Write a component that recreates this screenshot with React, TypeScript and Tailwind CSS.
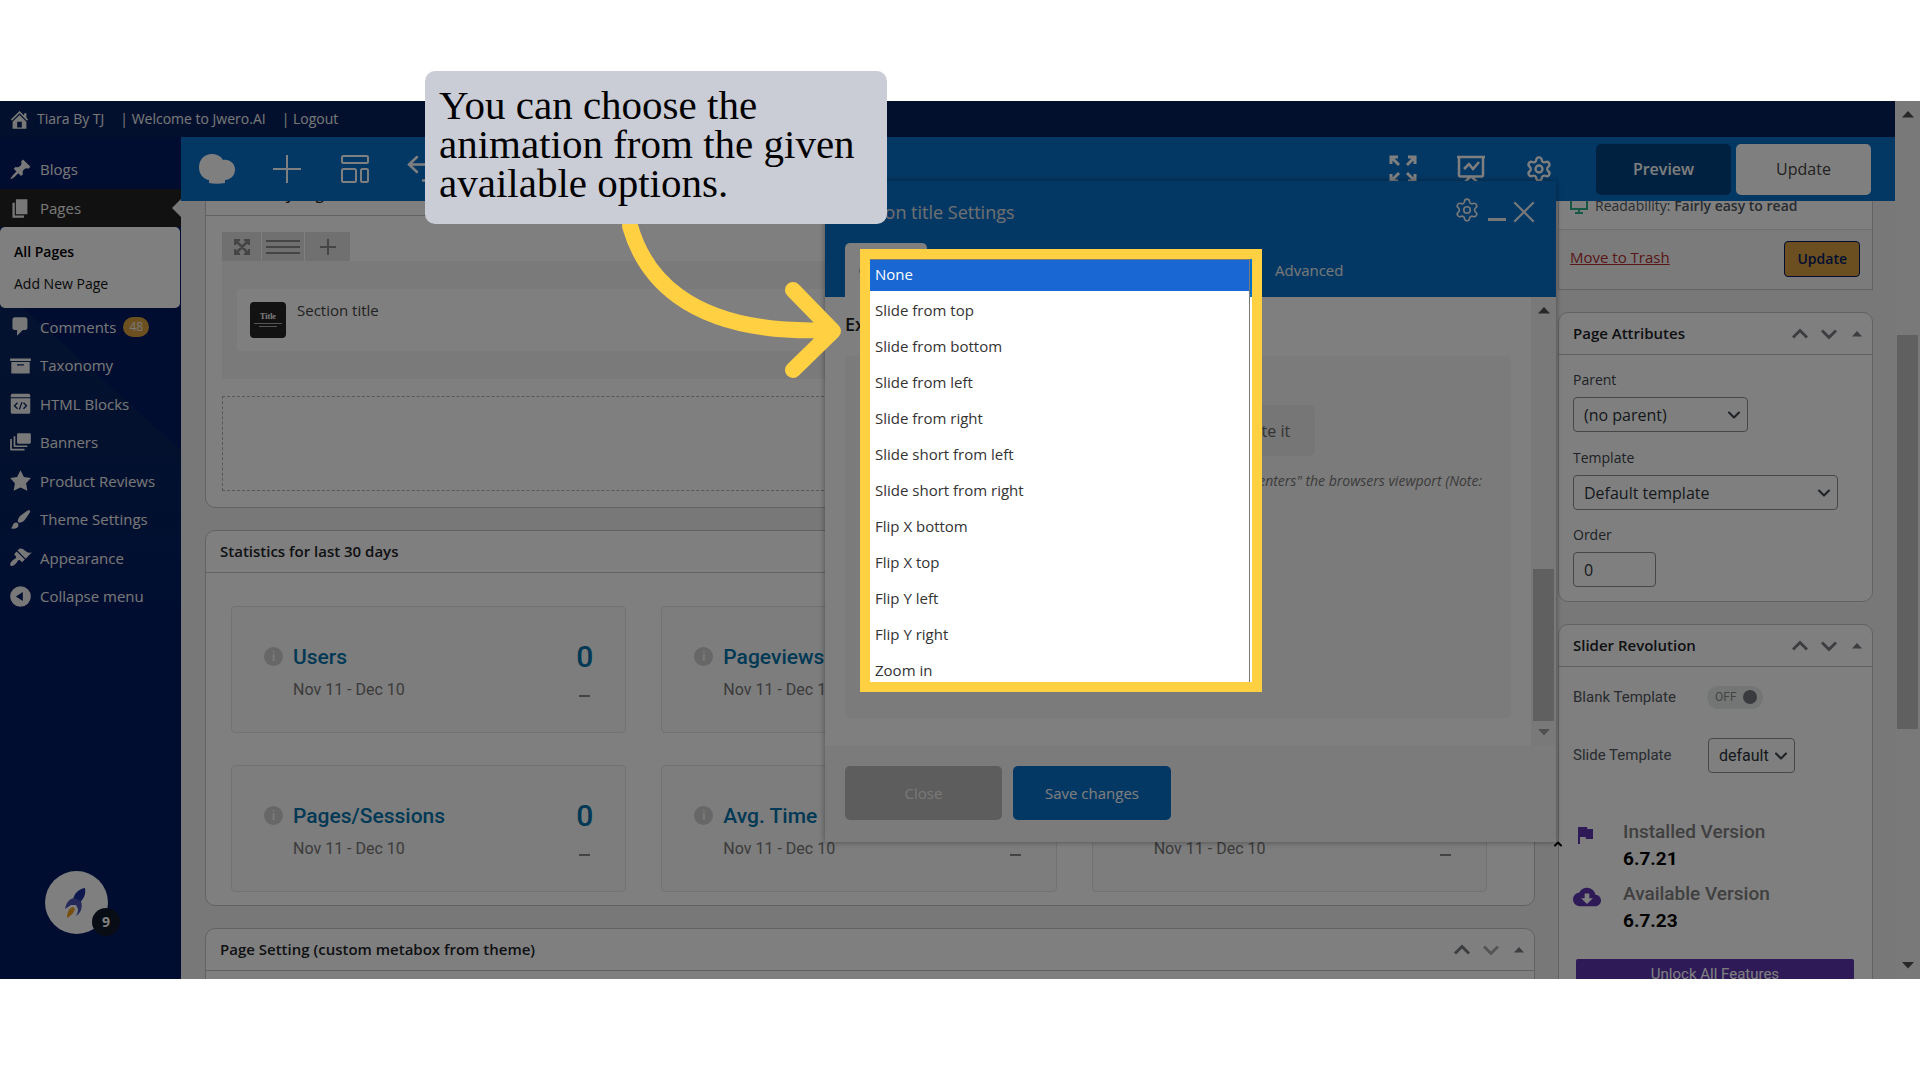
import React from "react";
import { ChevronDown, ChevronUp, Settings, X } from "lucide-react";
import { MdCloudDownload, MdFlag } from "react-icons/md";

const sans = "font-['Open_Sans','Noto_Sans',sans-serif]";

const animations = [
  "None",
  "Slide from top",
  "Slide from bottom",
  "Slide from left",
  "Slide from right",
  "Slide short from left",
  "Slide short from right",
  "Flip X bottom",
  "Flip X top",
  "Flip Y left",
  "Flip Y right",
  "Zoom in",
];

const stats = ["Users", "Pageviews", "Sessions", "Pages/Sessions", "Avg. Time", "Bounce Rate"];

const icons = {
  home: "M16 8.5l1.53 1.53-1.06 1.06L10 4.6l-6.47 6.49-1.06-1.06L10 2.5l4 4v-2h2v4zm-6-2.46l6 5.99V18H4v-5.97zM12 17v-5H8v5h4z",
  pin: "M10.44 3.02l1.82-1.82 6.36 6.35-1.83 1.82c-1.05-.68-2.48-.57-3.41.36l-.75.75c-.92.93-1.04 2.35-.35 3.41l-1.83 1.82-2.41-2.41-2.8 2.79c-.42.42-3.38 2.71-3.8 2.29s1.86-3.39 2.28-3.81l2.79-2.79L4.1 9.36l1.83-1.82c1.05.69 2.48.57 3.4-.36l.75-.75c.93-.92 1.05-2.35.36-3.41z",
  page: "M6 15V2h10v13H6zm-1 1h8v2H3V5h2v11z",
  comment: "M5 2h9c1.1 0 2 .9 2 2v7c0 1.1-.9 2-2 2h-2l-5 5v-5H5c-1.1 0-2-.9-2-2V4c0-1.1.9-2 2-2z",
  archive: "M19 4v2H1V4h18zM2 7h16v10H2V7zm11 3V9H7v1h6z",
  html: "M3 1.5h14a1.5 1.5 0 0 1 1.5 1.5v1.5h-17V3A1.5 1.5 0 0 1 3 1.5zM1.5 5.5h17v12a1.5 1.5 0 0 1-1.5 1.5H3a1.5 1.5 0 0 1-1.5-1.5zM7 9l-3 3 3 3 .8-.8L5.6 12l2.2-2.2zm6 0l-.8.8 2.2 2.2-2.2 2.2.8.8 3-3zm-2.2-.3l-2.3 6.4 1 .3 2.3-6.4z",
  banners: "M8 2h10q1 0 1 1v7q0 1-1 1H8q-1 0-1-1V3q0-1 1-1zM4 4.5h1.5v8h10.5V14H5q-1 0-1-1zM1 7h1.5v8.5h11V17H2q-1 0-1-1z",
  star: "M10 1l3 6 6 .75-4.12 4.62L16 19l-6-3-6 3 1.13-6.63L1 7.75 7 7z",
  brush: "M18.33 3.57s.27-.8-.31-1.36c-.53-.52-1.22-.24-1.22-.24-.61.3-5.76 3.47-7.67 5.57-.86.96-2.06 3.79-1.09 4.82.92.98 3.96-.17 4.79-1 2.06-2.06 5.21-7.17 5.5-7.79zM1.4 17.65c2.37-1.56 1.46-3.41 3.23-4.64.93-.65 2.22-.62 3.08.29.63.67.8 2.57-.16 3.46-1.57 1.45-4 1.55-6.15.89z",
  appearance: "M14.48 11.06L7.41 3.99l1.5-1.5c.5-.56 2.3-.47 3.51.32 1.21.8 1.43 1.28 2.91 2.1 1.18.64 2.45 1.26 4.45.85zm-.71.71L6.7 4.7 4.93 6.47c-.39.39-.39 1.02 0 1.41l1.06 1.06c.39.39.39 1.03 0 1.42-.6.6-1.43 1.11-2.21 1.69-.35.26-.7.53-1.01.84C1.43 14.23.4 16.08 1.4 17.07c.99 1 2.84-.03 4.18-1.36.31-.31.58-.66.85-1.02.57-.78 1.08-1.61 1.69-2.21.39-.39 1.02-.39 1.41 0l1.06 1.06c.39.39 1.02.39 1.41 0z",
  collapse: "M10 1a9 9 0 1 1 0 18 9 9 0 0 1 0-18zm2 5l-6 4 6 4z",
};

const menu = [
  { label: "Comments", icon: icons.comment, count: 48 },
  { label: "Taxonomy", icon: icons.archive },
  { label: "HTML Blocks", icon: icons.html },
  { label: "Banners", icon: icons.banners },
  { label: "Product Reviews", icon: icons.star },
  { label: "Theme Settings", icon: icons.brush },
  { label: "Appearance", icon: icons.appearance },
];

const Dashicon = ({ d }: { d: string }) => (
  <svg viewBox="0 0 20 20" className="size-[23px] shrink-0" fill="currentColor" fillRule="evenodd" aria-hidden="true">
    <path d={d} />
  </svg>
);

const Triangle = ({ className = "", down = false }: { className?: string; down?: boolean }) => (
  <svg viewBox="0 0 12 7" className={className} fill="currentColor" aria-hidden="true">
    <path d={down ? "M0 0h12L6 6.5z" : "M0 6.5h12L6 0z"} />
  </svg>
);

const Scrollbar = ({ children, atEnd = false }: { children: React.ReactNode; atEnd?: boolean }) => (
  <div className="flex w-[25px] shrink-0 flex-col items-center bg-[#f3f3f3] px-0.5 text-[#505050]">
    <Triangle className="mt-2.5 h-[7px] w-3" />
    <div className="flex w-full flex-1 flex-col">{children}</div>
    <Triangle down className={atEnd ? "mb-2.5 h-[7px] w-3 text-[#a0a0a0]" : "mb-2.5 h-[7px] w-3"} />
  </div>
);

const PanelHeader = ({ title, disabledDown = false }: { title: string; disabledDown?: boolean }) => (
  <div className="flex h-[42px] items-center justify-between border-b border-[#c3c4c7] pr-2.5 pl-3.5">
    <h2 className="text-[15px] font-semibold text-[#1d2327]">{title}</h2>
    <div className="flex items-center gap-px text-[#787c82]">
      <button type="button" aria-label="Move up">
        <ChevronUp className="size-7" strokeWidth={2.5} strokeLinecap="butt" strokeLinejoin="miter" />
      </button>
      <button type="button" aria-label="Move down" className={disabledDown ? "text-[#a7aaad]" : ""}>
        <ChevronDown className="size-7" strokeWidth={2.5} strokeLinecap="butt" strokeLinejoin="miter" />
      </button>
      <button type="button" aria-label="Toggle panel" className="pl-2">
        <Triangle className="h-2 w-2.5" />
      </button>
    </div>
  </div>
);

const Select = ({ id, value, className }: { id: string; value: string; className: string }) => (
  <span className="relative block w-fit">
    <select
      id={id}
      defaultValue={value}
      className={`h-[35px] appearance-none rounded-[4px] border border-[#8c8f94] bg-white pl-2.5 text-base font-normal text-[#2c3338] ${className}`}
    >
      <option>{value}</option>
    </select>
    <ChevronDown className="pointer-events-none absolute top-2 right-1 size-5 text-[#3c434a]" strokeWidth={2.5} />
  </span>
);

const AdminMenu = () => (
  <nav className="relative w-[181px] shrink-0 overflow-hidden bg-[#001a62] text-[15px] text-[#f0f0f1]">
    <div className="absolute inset-x-0 top-[150px] h-[340px] bg-linear-to-b from-[#08255e] via-[#06225e] to-[#001a62] [clip-path:polygon(0_0,181px_163px,181px_100%,0_100%)]" />
    <div className="relative">
      <a href="#blogs" className="mt-[13px] flex h-[39px] items-center gap-2 pl-[9px]">
        <Dashicon d={icons.pin} />
        Blogs
      </a>
      <a href="#pages" className="relative flex h-[38px] items-center gap-2 bg-[#222222] pl-[9px]">
        <Dashicon d={icons.page} />
        Pages
        <span className="absolute top-2.5 right-0 h-[18px] w-[9px] bg-[#f1f1f1] [clip-path:polygon(100%_0,100%_100%,0_50%)]" />
      </a>
      <div className="mr-px flex h-[81px] flex-col justify-center rounded-[5px] bg-white pl-3.5 text-sm leading-8 text-[#111111]">
        <a href="#all" className="font-semibold text-black">All Pages</a>
        <a href="#new">Add New Page</a>
      </div>
      <div className="flex h-[308px] flex-col">
        {menu.map((item) => (
          <a href="#menu" key={item.label} className="flex flex-1 items-center gap-2 pb-px pl-[9px]">
            <Dashicon d={item.icon} />
            <span>{item.label}</span>
            {item.count && (
              <span className="-ml-px flex h-5 items-center rounded-full bg-[#d9a03f] px-1.5 text-xs">{item.count}</span>
            )}
          </a>
        ))}
        <button type="button" className="flex flex-1 items-center gap-2 pb-px pl-[9px]">
          <Dashicon d={icons.collapse} />
          Collapse menu
        </button>
      </div>
    </div>
  </nav>
);

const EditorBar = () => (
  <header className="flex h-16 shrink-0 items-center bg-[#0870c9] pr-6 pl-[18px] text-white">
    <svg viewBox="0 0 36 30" className="h-[30px] w-9" fill="currentColor" aria-hidden="true">
      <path d="M13 0c5 0 9 2.5 11 6 7-1 12 4 12 9.5 0 6-4 10-10 10.5v3c-5 1-11 1-16 0v-3C4 25 0 20 0 13.5 0 5 6 0 13 0z" />
    </svg>
    <button type="button" aria-label="Add element" className="ml-[38px]">
      <svg viewBox="0 0 28 28" className="size-7" stroke="currentColor" strokeWidth="2">
        <path d="M14 0v28M0 14h28" />
      </svg>
    </button>
    <button type="button" aria-label="Templates" className="ml-10">
      <svg viewBox="0 0 28 28" className="size-7" fill="none" stroke="currentColor" strokeWidth="2">
        <rect x="1" y="1" width="26" height="7" rx="1.5" />
        <rect x="1" y="14" width="14" height="13" rx="1.5" />
        <rect x="20" y="14" width="7" height="13" rx="1.5" />
      </svg>
    </button>
    <button type="button" aria-label="Undo" className="ml-[38px]">
      <svg viewBox="0 0 28 28" className="size-7" fill="none" stroke="currentColor" strokeWidth="2.5" strokeLinecap="round">
        <path d="M10 2L2 9.5 10 17M2 9.5h16c10 0 10 16 0 16h-2" />
      </svg>
    </button>
    <div className="ml-auto flex items-center gap-10">
      <button type="button" aria-label="Fullscreen">
        <svg viewBox="0 0 28 28" className="size-7" fill="none" stroke="currentColor" strokeWidth="3">
          <path d="M2 9V2h7M2 2l8 8M19 2h7v7M26 2l-8 8M2 19v7h7M2 26l8-8M19 26h7v-7M26 26l-8-8" />
        </svg>
      </button>
      <button type="button" aria-label="Page performance">
        <svg viewBox="0 0 28 28" className="size-7" fill="none" stroke="currentColor" strokeWidth="2.5">
          <path d="M0 2h28M2 2v18q0 1.5 1.5 1.5h21q1.5 0 1.5-1.5V2M7 14l5-5 4 5 6-7M14 21l-7 7M14 21l7 7" />
        </svg>
      </button>
      <button type="button" aria-label="Settings">
        <Settings className="size-7" />
      </button>
    </div>
    <div className="ml-[43px] flex gap-[5px] text-base font-semibold">
      <button type="button" className="h-[51px] w-[135px] rounded-[5px] bg-[#004481]">Preview</button>
      <button type="button" className="h-[51px] w-[135px] rounded-[5px] bg-white font-medium text-[#444444]">Update</button>
    </div>
  </header>
);

const StatCard = ({ title }: { title: string }) => (
  <div className="flex h-[127px] justify-between rounded-[4px] border border-[#e4e4e4] bg-[#fafafa] px-8 pt-[34px] font-['Roboto',sans-serif]">
    <div className="flex gap-2.5">
      <span className="mt-1.5 flex size-[19px] items-center justify-center rounded-full bg-[#cfcfcf] text-xs font-bold text-[#f4f4f4]">i</span>
      <div>
        <h3 className="text-[21px] leading-8 font-medium text-[#0073aa]">{title}</h3>
        <p className="leading-[34px] text-[#777777]">Nov 11 - Dec 10</p>
      </div>
    </div>
    <div className="flex flex-col items-center">
      <span className="text-3xl leading-8 font-medium text-[#0073aa]">0</span>
      <span className="mt-[22px] h-[2px] w-[11px] bg-[#888888]" />
    </div>
  </div>
);

const MainColumn = () => (
  <main className="-mt-7 flex min-w-0 flex-1 flex-col gap-[22px]">
    <section className="rounded-[10px] border border-[#c3c4c7] bg-white">
      <div className="flex h-[42px] items-center border-b border-[#c3c4c7] pl-3.5">
        <h2 className="text-[15px] font-semibold text-[#1d2327]">WPBakery Page Builder</h2>
      </div>
      <div className="p-4">
        <div className="flex gap-px text-[#8a8a8a]">
          <button type="button" aria-label="Drag row" className="flex h-[29px] w-[39px] items-center justify-center bg-[#e0e0e0]">
            <svg viewBox="0 0 16 16" className="size-4" fill="none" stroke="currentColor" strokeWidth="2.5">
              <path d="M1 6V1h5M10 1h5v5M15 10v5h-5M6 15H1v-5M2 2l12 12M14 2L2 14" />
            </svg>
          </button>
          <button type="button" aria-label="Row layout" className="flex h-[29px] w-[42px] flex-col items-center justify-center gap-1 bg-[#e0e0e0]">
            <span className="h-[2px] w-[34px] bg-[#8a8a8a]" />
            <span className="h-[2px] w-[34px] bg-[#8a8a8a]" />
            <span className="h-[2px] w-[34px] bg-[#8a8a8a]" />
          </button>
          <button type="button" aria-label="Add column" className="flex h-[29px] w-[45px] items-center justify-center bg-[#e0e0e0]">
            <svg viewBox="0 0 16 16" className="size-4" stroke="currentColor" strokeWidth="2">
              <path d="M8 0v16M0 8h16" />
            </svg>
          </button>
        </div>
        <div className="bg-[#f5f5f5] px-[15px] py-7">
          <div className="flex h-[62px] gap-[11px] rounded-[3px] bg-white pt-[13px] pl-[13px]">
            <span className="flex size-9 flex-col items-center justify-center gap-0.5 rounded-[4px] bg-[#242424] font-['Liberation_Serif',serif] text-[8px] leading-none font-bold text-white">
              Title
              <span className="h-px w-7 bg-[#aaaaaa]" />
              <span className="h-px w-[18px] bg-[#aaaaaa]" />
            </span>
            <h3 className="text-[15px] leading-4 text-[#444444]">Section title</h3>
          </div>
        </div>
        <div className="mt-[17px] h-[95px] border border-dashed border-[#b0b0b0]" />
      </div>
    </section>

    <section className="rounded-[10px] border border-[#c3c4c7] bg-white">
      <PanelHeader title="Statistics for last 30 days" />
      <div className="grid grid-cols-3 gap-x-[35px] gap-y-8 pt-[33px] pr-[47px] pb-[13px] pl-[25px]">
        {stats.map((title) => (
          <StatCard title={title} key={title} />
        ))}
      </div>
    </section>

    <section className="rounded-t-[10px] border border-[#c3c4c7] bg-white">
      <PanelHeader title="Page Setting (custom metabox from theme)" disabledDown />
      <div className="h-40" />
    </section>
  </main>
);

const SideColumn = () => (
  <aside className="-mt-3 flex w-[315px] shrink-0 flex-col gap-[22px]">
    <section className="border border-[#c3c4c7] bg-white text-sm">
      <div className="flex h-10 items-center gap-[7px] border-b border-[#dcdcde] pb-2 pl-[11px] text-[#50575e]">
        <svg viewBox="0 0 18 18" className="size-[18px]" fill="none" stroke="#2fae8a" strokeWidth="2">
          <path d="M1 1h16v11H1zM9 12v4M5 16h8" />
        </svg>
        <p>
          Readability: <span className="font-semibold">Fairly easy to read</span>
        </p>
      </div>
      <div className="flex h-[59px] items-center justify-between bg-[#f6f7f7] pr-3 pb-0.5 pl-[11px]">
        <a href="#trash" className="pb-0.5 text-[15px] text-[#b32d2e] underline">Move to Trash</a>
        <button type="button" className="h-9 rounded-[4px] border border-[#001a62] bg-[#d79f40] px-3 font-semibold text-[#001a62]">
          Update
        </button>
      </div>
    </section>

    <section className="rounded-[10px] border border-[#c3c4c7] bg-white">
      <PanelHeader title="Page Attributes" />
      <div className="p-3.5 text-sm font-medium text-[#3c434a]">
        <label htmlFor="parent" className="block h-7 leading-[22px]">Parent</label>
        <Select id="parent" value="(no parent)" className="w-[175px]" />
        <label htmlFor="template" className="mt-[15px] block h-7 leading-[22px]">Template</label>
        <Select id="template" value="Default template" className="w-[265px]" />
        <label htmlFor="order" className="mt-3.5 block h-7 leading-[22px]">Order</label>
        <input id="order" defaultValue="0" className="block h-[35px] w-[83px] rounded-[4px] border border-[#8c8f94] pl-2.5 text-base font-normal text-[#2c3338]" />
      </div>
    </section>

    <section className="rounded-t-[10px] border border-[#c3c4c7] bg-white font-['Roboto',sans-serif]">
      <div className="font-['Open_Sans','Noto_Sans',sans-serif]">
        <PanelHeader title="Slider Revolution" />
      </div>
      <div className="px-3.5 pt-[18px] text-[15px] text-[#50575e]">
        <div className="flex h-6 items-center">
          <label htmlFor="blank" className="w-[134px]">Blank Template</label>
          <button id="blank" type="button" role="switch" aria-checked="false" className="flex h-[23px] w-14 items-center justify-between rounded-full bg-[#e9edec] pr-1.5 pl-2 text-xs text-[#888888]">
            OFF
            <span className="size-3.5 rounded-full bg-[#72777c]" />
          </button>
        </div>
        <div className="mt-[29px] flex items-center">
          <label htmlFor="slide" className="w-[135px]">Slide Template</label>
          <Select id="slide" value="default" className="w-[87px]" />
        </div>
        <div className="mt-11 grid grid-cols-[50px_1fr] text-[19px] font-medium">
          <MdFlag className="mt-1.5 size-6 text-[#5e35b1]" />
          <div>
            <h3 className="leading-[30px] text-[#808080]">Installed Version</h3>
            <p className="leading-6 font-bold text-black">6.7.21</p>
          </div>
          <MdCloudDownload className="mt-3 size-7 text-[#5e35b1]" />
          <div className="pt-2">
            <h3 className="leading-[30px] text-[#808080]">Available Version</h3>
            <p className="leading-6 font-bold text-black">6.7.23</p>
          </div>
        </div>
        <button type="button" className="mx-[3px] mt-[26px] h-[31px] w-[278px] rounded-[2px] bg-[#5e35b1] text-[15px] text-white">
          Unlock All Features
        </button>
      </div>
    </section>
  </aside>
);

const SettingsWindow = () => (
  <div role="dialog" aria-label="Section title Settings" className="absolute top-20 right-[364px] flex h-[661px] w-[731px] flex-col bg-white shadow-[0_0_6px_rgba(0,0,0,0.4)]">
    <div className="flex h-[116px] shrink-0 flex-col justify-between bg-[#0870c9] pl-5 text-[#f0f0f0]">
      <div className="flex items-start justify-between pt-[13px] pr-3.5">
        <h2 className="pt-1 text-lg text-[#e0e0e0]">Section title Settings</h2>
        <div className="flex items-center">
          <button type="button" aria-label="Window settings" className="pb-1">
            <Settings className="size-[26px]" strokeWidth={1.5} />
          </button>
          <button type="button" aria-label="Minimize" className="ml-2 flex h-[18px] items-end">
            <span className="h-[3px] w-[18px] bg-current" />
          </button>
          <button type="button" aria-label="Close window">
            <X className="size-9" strokeWidth={1.5} />
          </button>
        </div>
      </div>
      <div className="flex h-[54px] items-center text-[15px]">
        <button type="button" className="h-full w-[82px] rounded-t-[5px] bg-white text-[#0870c9]">General</button>
        <button type="button" className="ml-[348px]">Advanced</button>
      </div>
    </div>
    <div className="flex min-h-0 flex-1">
      <div className="flex-1 px-5">
        <h3 className="pt-3 text-lg leading-[30px] font-semibold text-[#222222]">Ex</h3>
        <div className="mt-[17px] h-[362px] rounded-[5px] bg-[#f6f6f6] pt-[49px] pr-5 pl-[35px]">
          <button type="button" className="ml-[299px] block h-[51px] w-[136px] rounded-[5px] bg-[#ececec] pl-2.5 text-base text-[#666666]">
            Animate it
          </button>
          <p className="pt-[13px] text-sm leading-6 text-[#777777] italic">
            Select type of animation for element to be animated when it "enters" the browsers viewport (Note: works
            only in modern browsers).
          </p>
        </div>
      </div>
      <Scrollbar atEnd>
        <div className="flex-1" />
        <div className="mb-2 h-[152px] bg-[#c1c1c1]" />
      </Scrollbar>
    </div>
    <div className="flex h-24 shrink-0 gap-[11px] bg-[#f6f6f6] pt-5 pl-5 text-[15px]">
      <button type="button" className="h-[54px] w-[157px] rounded-[5px] bg-[#bababa] text-[#f0f0f0]">Close</button>
      <button type="button" className="h-[54px] w-[158px] rounded-[5px] bg-[#0870c9] text-white">Save changes</button>
    </div>
    <ChevronUp className="absolute -right-2 -bottom-2 size-3 text-black" strokeWidth={4} />
  </div>
);

const AnimationList = () => (
  <div className="absolute top-[148px] left-[860px] h-[443px] w-[402px] border-[10px] border-[#ffd042] bg-linear-to-b from-[#0870c9] from-[38px] to-white to-[38px] pr-[2px]">
    <ul role="listbox" aria-label="Animation" className="h-full overflow-hidden border-t border-r border-[#7a7a7a] bg-white text-[15px] text-[#333333]">
      {animations.map((name, key) => (
        <li
          key={name}
          role="option"
          aria-selected={key === 0}
          className={key === 0 ? "flex h-[31px] items-center bg-[#1967d2] pb-0.5 pl-[5px] text-white" : "flex h-9 items-center pt-0.5 pl-[5px]"}
        >
          {name}
        </li>
      ))}
    </ul>
  </div>
);

const App = () => {
  return (
    <div className={`h-screen bg-white py-[101px] ${sans}`}>
      <div className="relative flex h-full">
        <div className="relative flex min-w-0 flex-1 flex-col overflow-hidden">
          <div className="flex h-9 shrink-0 items-center bg-[#04215b] pl-2 text-sm text-[#f0f0f1]">
            <a href="#home" className="flex items-center gap-1.5">
              <Dashicon d={icons.home} />
              Tiara By TJ
            </a>
            <a href="#welcome" className="ml-4">| Welcome to Jwero.AI</a>
            <a href="#logout" className="ml-4">| Logout</a>
          </div>
          <div className="flex min-h-0 flex-1">
            <AdminMenu />
            <div className="flex min-w-0 flex-1 flex-col">
              <EditorBar />
              <div className="flex min-h-0 flex-1 items-start gap-[23px] overflow-hidden bg-[#f1f1f1] pr-[22px] pl-6">
                <MainColumn />
                <SideColumn />
              </div>
            </div>
          </div>
        </div>
        <Scrollbar>
          <div className="h-[217px]" />
          <div className="h-[394px] bg-[#c1c1c1]" />
        </Scrollbar>

        <SettingsWindow />

        <button type="button" aria-label="Open launcher" className="absolute bottom-[45px] left-[45px] size-[63px] rounded-full bg-white">
          <svg viewBox="0 0 63 63" className="size-full" aria-hidden="true">
            <path d="M40 17c-7 1-11 6-12 12l6 3c5-4 7-9 6-15z" fill="#1c2f9c" />
            <path d="M29 27c-5 1-8 5-9 11l6-4 5 0 2 4c0 3-1 5-2 7 5-3 7-9 5-15z" fill="#4a55b5" />
            <path d="M28 36c-4 1-6 5-6 11 4-2 7-5 8-9z" fill="#f0a020" />
          </svg>
          <span className="absolute -right-3 -bottom-0.5 flex size-7 items-center justify-center rounded-full bg-[#101828] text-sm font-bold text-white">9</span>
        </button>

        {/* Dimmed backdrop under the tour step */}
        <div className="pointer-events-none absolute inset-0 bg-black/50" />

        <AnimationList />
        <svg viewBox="0 0 240 170" className="absolute top-[113px] left-[610px] h-[170px] w-60" fill="none" stroke="#ffd042" strokeWidth="16" strokeLinecap="round" strokeLinejoin="round" aria-hidden="true">
          <path d="M20 12c12 42 50 110 199 104M183 76l40 41-40 39" />
        </svg>
        <p className="absolute -top-[30px] left-[425px] h-[153px] w-[462px] rounded-[10px] bg-[#cacdd6] px-3.5 pt-[15px] font-['Liberation_Serif',serif] text-[41px] leading-[39px] text-black">
          You can choose the animation from the given available options.
        </p>
      </div>
    </div>
  );
};

export default App;
